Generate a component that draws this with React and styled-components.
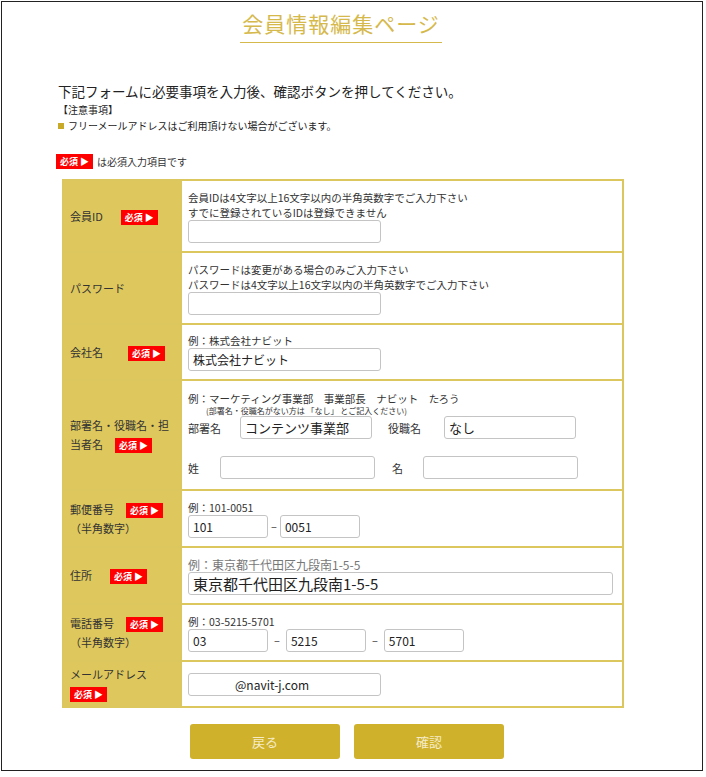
import React from "react";
import styled, { createGlobalStyle } from "styled-components";

const G = createGlobalStyle`
  body{margin:0;font-family:"Noto Sans CJK JP","Noto Sans",sans-serif;color:#333;background:#fff;}
`;
const Frame = styled.div`
  width:702px;height:770px;border:1px solid #222;margin:1px 0 0 1px;box-sizing:border-box;position:relative;
`;
const Title = styled.h1`
  margin:6px 0 0 238px;width:202px;text-align:center;font-size:21px;font-weight:400;color:#d6b94c;
  border-bottom:1px solid #d6b94c;padding-bottom:4px;letter-spacing:1px;
`;
const Lead = styled.p`margin:38px 0 0 56px;font-size:13.5px;color:#222;`;
const Note = styled.div`margin:1px 0 0 56px;font-size:10px;line-height:16px;color:#222;`;
const Sq = styled.span`display:inline-block;width:6px;height:6px;background:#c9a928;margin-right:4px;vertical-align:1px;`;
const Legend = styled.div`margin:20px 0 0 54px;font-size:10px;display:flex;align-items:center;gap:4px;`;
const Badge = styled.span`
  display:inline-block;background:#f00;color:#fff;font-size:9px;font-weight:700;line-height:15px;padding:0 4px;
  white-space:nowrap;margin-left:${p=>p.ml||0}px;
`;
const Table = styled.table`
  margin:10px 0 0 60px;width:562px;border-collapse:collapse;font-size:11px;
  td{border:2px solid #dcc65e;}
`;
const Label = styled.td`
  background:#dec75d;width:104px;padding:0 6px;font-size:11px;line-height:19px;color:#333;height:${p=>p.h}px;
`;
const Cell = styled.td`padding:4px 6px;vertical-align:middle;background:#fff;`;
const Hint = styled.div`font-size:10.5px;line-height:15px;color:#333;`;
const Small = styled.div`font-size:8px;line-height:10px;margin-left:18px;color:#333;`;
const Input = styled.input`
  width:${p=>p.w}px;height:23px;box-sizing:border-box;border:1.5px solid #c4c4c4;border-radius:3px;
  font-family:inherit;font-size:${p=>p.fs||12}px;padding:0 ${p=>p.pl||4}px;color:#222;
`;
const Line = styled.div`display:flex;align-items:center;gap:${p=>p.gap||6}px;margin-top:${p=>p.mt||0}px;`;
const Lbl = styled.span`font-size:11px;width:${p=>p.w}px;`;
const Btns = styled.div`display:flex;justify-content:center;gap:14px;margin:16px 0 0 -10px;`;
const Btn = styled.button`
  width:150px;height:35px;border:none;border-radius:3px;background:#cfb12b;color:#f6ecc8;font-size:13px;font-family:inherit;
`;

export default function App(){
  return <><G/><Frame>
    <Title>会員情報編集ページ</Title>
    <Lead>下記フォームに必要事項を入力後、確認ボタンを押してください。</Lead>
    <Note>【注意事項】<br/><Sq/>フリーメールアドレスはご利用頂けない場合がございます。</Note>
    <Legend><Badge>必須 ▶</Badge>は必須入力項目です</Legend>
    <Table><tbody>
      <tr><Label h={70}>会員ID<Badge ml={18}>必須 ▶</Badge></Label>
        <Cell><Hint>会員IDは4文字以上16文字以内の半角英数字でご入力下さい<br/>すでに登録されているIDは登録できません</Hint><Input w={193}/></Cell></tr>
      <tr><Label h={70}>パスワード</Label>
        <Cell><Hint>パスワードは変更がある場合のみご入力下さい<br/>パスワードは4文字以上16文字以内の半角英数字でご入力下さい</Hint><Input w={193}/></Cell></tr>
      <tr><Label h={54}>会社名<Badge ml={25}>必須 ▶</Badge></Label>
        <Cell><Hint>例：株式会社ナビット</Hint><Input w={193} defaultValue="株式会社ナビット"/></Cell></tr>
      <tr><Label h={108}>部署名・役職名・担<br/>当者名<Badge ml={12}>必須 ▶</Badge></Label>
        <Cell><Hint>例：マーケティング事業部　事業部長　ナビット　たろう</Hint>
          <Small>(部署名・役職名がない方は 「なし」 とご記入ください)</Small>
          <Line gap={0}><Lbl w={46}>部署名</Lbl><Input w={132} fs={13} defaultValue="コンテンツ事業部"/><Lbl w={50} style={{marginLeft:10}}>役職名</Lbl><Input w={132} fs={13} defaultValue="なし"/></Line>
          <Line gap={0} mt={17}><Lbl w={26}>姓</Lbl><Input w={155}/><Lbl w={25} style={{marginLeft:11}}>名</Lbl><Input w={155}/></Line>
        </Cell></tr>
      <tr><Label h={55}>郵便番号<Badge ml={12}>必須 ▶</Badge><br/>（半角数字）</Label>
        <Cell><Hint>例：101-0051</Hint><Line gap={3}><Input w={80} defaultValue="101"/>–<Input w={80} defaultValue="0051"/></Line></Cell></tr>
      <tr><Label h={55}>住所<Badge ml={18}>必須 ▶</Badge></Label>
        <Cell><Hint style={{color:"#777",fontSize:12}}>例：東京都千代田区九段南1-5-5</Hint><Input w={425} fs={15} defaultValue="東京都千代田区九段南1-5-5"/></Cell></tr>
      <tr><Label h={55}>電話番号<Badge ml={12}>必須 ▶</Badge><br/>（半角数字）</Label>
        <Cell><Hint>例：03-5215-5701</Hint><Line gap={6}><Input w={80} defaultValue="03"/>–<Input w={80} defaultValue="5215"/>–<Input w={80} defaultValue="5701"/></Line></Cell></tr>
      <tr><Label h={44}>メールアドレス<br/><Badge>必須 ▶</Badge></Label>
        <Cell><Input w={193} pl={46} defaultValue="@navit-j.com"/></Cell></tr>
    </tbody></Table>
    <Btns><Btn>戻る</Btn><Btn>確認</Btn></Btns>
  </Frame></>;
}
